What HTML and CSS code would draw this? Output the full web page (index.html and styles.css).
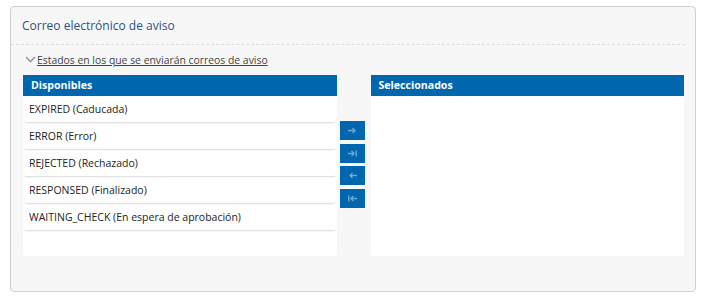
FILE: index.html
```html
<!DOCTYPE html>
<html lang="es">
  <head>
    <meta charset="UTF-8" />
    <meta name="viewport" content="width=device-width, initial-scale=1.0" />
    <title>Correo electrónico de aviso</title>
    <link rel="stylesheet" href="styles.css">
  </head>
  <body>
    <div class="panel">
      <h2 class="panel-title">Correo electrónico de aviso</h2>
      <div class="panel-body">
        <a href="#" class="toggle">
          <svg class="chevron" width="11" height="7" viewBox="0 0 11 7">
            <path d="M1 1 L5.5 5.5 L10 1" fill="none" stroke="#999" stroke-width="1.6" />
          </svg><span>Estados en los que se enviarán correos de aviso</span>
        </a>
        <div class="picker">
          <div class="list">
            <div class="list-head">Disponibles</div>
            <ul class="list-body">
              <li>EXPIRED (Caducada)</li>
              <li>ERROR (Error)</li>
              <li>REJECTED (Rechazado)</li>
              <li>RESPONSED (Finalizado)</li>
              <li>WAITING_CHECK (En espera de aprobación)</li>
            </ul>
          </div>
          <div class="actions">
            <button title="Añadir">
              <svg width="9" height="7" viewBox="0 0 9 7"><path d="M0 3.5 H7 M4.5 1 L7 3.5 L4.5 6" fill="none" stroke="#6fa6d6" stroke-width="1.4" /></svg>
            </button>
            <button title="Añadir todos">
              <svg width="9" height="7" viewBox="0 0 9 7"><path d="M0 3.5 H6 M3.5 1 L6 3.5 L3.5 6 M8.2 0.5 V6.5" fill="none" stroke="#6fa6d6" stroke-width="1.4" /></svg>
            </button>
            <button title="Quitar">
              <svg width="9" height="7" viewBox="0 0 9 7"><path d="M9 3.5 H2 M4.5 1 L2 3.5 L4.5 6" fill="none" stroke="#6fa6d6" stroke-width="1.4" /></svg>
            </button>
            <button title="Quitar todos">
              <svg width="9" height="7" viewBox="0 0 9 7"><path d="M9 3.5 H3 M5.5 1 L3 3.5 L5.5 6 M0.8 0.5 V6.5" fill="none" stroke="#6fa6d6" stroke-width="1.4" /></svg>
            </button>
          </div>
          <div class="list">
            <div class="list-head">Seleccionados</div>
            <ul class="list-body"></ul>
          </div>
        </div>
      </div>
    </div>
  </body>
</html>
```

FILE: styles.css
```css
/* General */
body {
  font-family: "Open Sans", Arial, sans-serif;
  margin: 0;
  padding: 6px 13px 0 10px;
  background: #fff;
  color: #333;
}

/* Panel */
.panel {
  background: #f7f7f7;
  border: 1px solid #cfcfcf;
  border-radius: 4px;
  height: 286px;
  box-sizing: border-box;
}
.panel-title {
  margin: 0 10px 0 0;
  padding: 10px 0 10px 11px;
  font-size: 12px;
  font-weight: normal;
  color: #2c5282;
  border-bottom: 1px dashed #dcdcdc;
  line-height: 17px;
}
.panel-body {
  padding: 6px 11px 0 12px;
}

/* Toggle link */
.toggle {
  display: flex;
  align-items: center;
  color: #444;
  font-size: 10.4px;
  text-decoration: none;
  margin-left: 2px;
  height: 17px;
}
.toggle span {
  text-decoration: underline;
}
.chevron {
  margin-right: 1px;
}

/* Dual list */
.picker {
  display: flex;
  margin-top: 7px;
}
.list {
  width: 314px;
}
.list-head {
  background: #0066ae;
  color: #fff;
  font-weight: bold;
  font-size: 10.6px;
  height: 21px;
  line-height: 21px;
  padding-left: 8px;
}
.list-body {
  list-style: none;
  margin: 0;
  padding: 0 1px;
  background: #fff;
  height: 160px;
  border-radius: 0 0 4px 4px;
}
.list-body li {
  height: 26px;
  line-height: 26px;
  font-size: 10.5px;
  color: #222;
  padding-left: 5px;
  border-bottom: 1px solid #e2e2e2;
  border-radius: 0 0 3px 3px;
  box-shadow: 0 1px 1px rgba(0, 0, 0, 0.04);
}

/* Buttons */
.actions {
  display: flex;
  flex-direction: column;
  gap: 3.5px;
  padding: 46px 6px 0 3px;
}
.actions button {
  width: 25px;
  height: 19px;
  border: none;
  padding: 0;
  background: #0066ae;
  cursor: pointer;
  display: flex;
  align-items: center;
  justify-content: center;
}
```
